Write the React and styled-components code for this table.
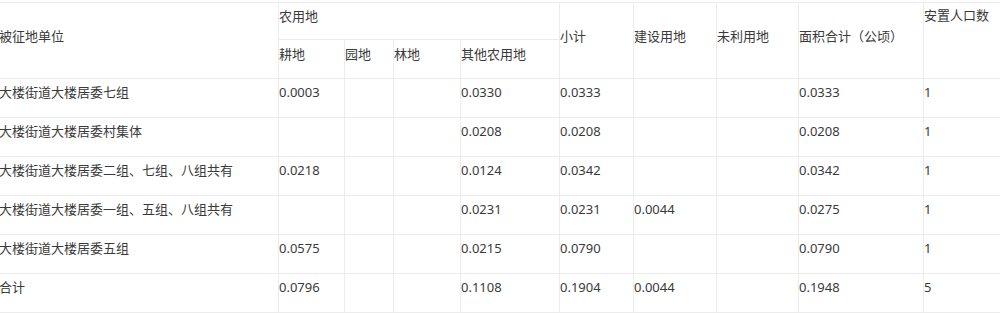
import React from 'react';
import styled, { createGlobalStyle } from 'styled-components';

const GlobalStyle = createGlobalStyle`
  html, body {
    margin: 0;
    padding: 0;
    background: #fff;
    overflow: hidden;
  }
`;

const Wrap = styled.div`
  padding-top: 2px;
  margin-left: -2px;
  width: 1030px;
`;

const Table = styled.table`
  border-collapse: collapse;
  table-layout: fixed;
  width: 1024px;
  font-family: "Noto Sans", "Noto Sans CJK SC", sans-serif;
  font-size: 13px;
  color: #3a3a3a;
`;

const Th = styled.td`
  border: 1px solid #ececec;
  padding: 2px 1px 12px 0;
  line-height: 20px;
  vertical-align: ${(p) => (p.$top ? 'top' : 'middle')};
  text-align: left;
  font-weight: 400;
  white-space: nowrap;
`;

const Td = styled.td`
  border: 1px solid #ececec;
  height: 39px;
  box-sizing: border-box;
  padding: 3px 1px 0 0;
  line-height: 20px;
  vertical-align: top;
  white-space: nowrap;
`;

const HeadRow = styled.tr`
  height: ${(p) => p.$h}px;
`;

const widths = [280, 66, 49, 67, 99, 74, 83, 82, 125, 99];

const rows = [
  ['大楼街道大楼居委七组', '0.0003', '', '', '0.0330', '0.0333', '', '', '0.0333', '1'],
  ['大楼街道大楼居委村集体', '', '', '', '0.0208', '0.0208', '', '', '0.0208', '1'],
  ['大楼街道大楼居委二组、七组、八组共有', '0.0218', '', '', '0.0124', '0.0342', '', '', '0.0342', '1'],
  ['大楼街道大楼居委一组、五组、八组共有', '', '', '', '0.0231', '0.0231', '0.0044', '', '0.0275', '1'],
  ['大楼街道大楼居委五组', '0.0575', '', '', '0.0215', '0.0790', '', '', '0.0790', '1'],
  ['合计', '0.0796', '', '', '0.1108', '0.1904', '0.0044', '', '0.1948', '5'],
];

const App = () => {
  return (
    <>
      <GlobalStyle />
      <Wrap>
        <Table>
          <colgroup>
            {widths.map((w, i) => (
              <col key={i} style={{ width: w }} />
            ))}
          </colgroup>
          <tbody>
            <HeadRow $h={37}>
              <Th rowSpan={2}>被征地单位</Th>
              <Th colSpan={4}>农用地</Th>
              <Th rowSpan={2}>小计</Th>
              <Th rowSpan={2}>建设用地</Th>
              <Th rowSpan={2}>未利用地</Th>
              <Th rowSpan={2}>面积合计（公顷）</Th>
              <Th rowSpan={2} $top>安置人口数</Th>
            </HeadRow>
            <HeadRow $h={39}>
              <Th>耕地</Th>
              <Th>园地</Th>
              <Th>林地</Th>
              <Th>其他农用地</Th>
            </HeadRow>
            {rows.map((r, i) => (
              <tr key={i}>
                {r.map((c, j) => (
                  <Td key={j}>{c}</Td>
                ))}
              </tr>
            ))}
          </tbody>
        </Table>
      </Wrap>
    </>
  );
};

export default App;
